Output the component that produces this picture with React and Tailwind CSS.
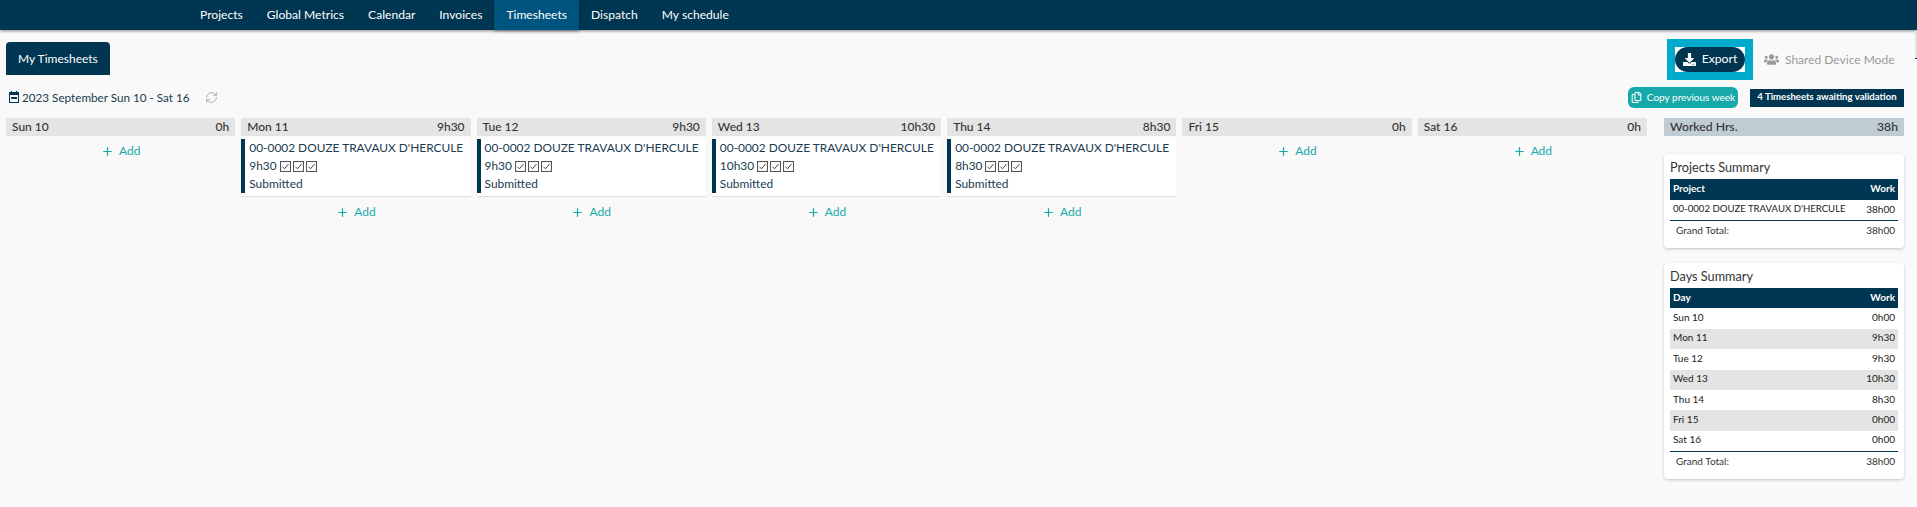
import React from 'react';
import { FaDownload, FaUsers, FaRegCopy } from 'react-icons/fa';
import { RefreshCw, Plus } from 'lucide-react';

const navItems = ['Projects', 'Global Metrics', 'Calendar', 'Invoices', 'Timesheets', 'Dispatch', 'My schedule'];

const days = [
  { label: 'Sun 10', total: '0h' },
  { label: 'Mon 11', total: '9h30', entry: '9h30' },
  { label: 'Tue 12', total: '9h30', entry: '9h30' },
  { label: 'Wed 13', total: '10h30', entry: '10h30' },
  { label: 'Thu 14', total: '8h30', entry: '8h30' },
  { label: 'Fri 15', total: '0h' },
  { label: 'Sat 16', total: '0h' },
];

const daySummary = [
  ['Sun 10', '0h00'],
  ['Mon 11', '9h30'],
  ['Tue 12', '9h30'],
  ['Wed 13', '10h30'],
  ['Thu 14', '8h30'],
  ['Fri 15', '0h00'],
  ['Sat 16', '0h00'],
];

const CalendarIcon = () => (
  <svg width="10" height="12" viewBox="0 0 10 12" className="mr-[3px] ml-[3px] shrink-0 text-[#003651]">
    <rect x="0.5" y="1.5" width="9" height="10" fill="none" stroke="currentColor" />
    <rect x="0" y="1" width="10" height="3" fill="currentColor" />
    <rect x="2" y="0" width="1" height="2" fill="currentColor" />
    <rect x="7" y="0" width="1" height="2" fill="currentColor" />
    <rect x="2" y="6" width="6" height="2" fill="currentColor" />
  </svg>
);

const CheckBox = () => (
  <svg width="11" height="11" viewBox="0 0 11 11" className="shrink-0">
    <rect x="0.5" y="0.5" width="10" height="10" fill="none" stroke="#555" strokeWidth="1.1" />
    <path d="M2.5 5.8 L4.5 7.8 L8.5 3" fill="none" stroke="#444" strokeWidth="1" />
  </svg>
);

const AddButton = () => (
  <div className="flex h-[30px] items-center justify-center gap-[5px] text-[12px] text-[#17a9a9]">
    <Plus size={13} strokeWidth={2.25} />
    <span>Add</span>
  </div>
);

const EntryCard = ({ hours }) => (
  <div className="mt-[3px] flex h-[57px] bg-white shadow-[0_1px_1px_rgba(0,0,0,0.1)]">
    <div className="h-[54px] w-1 bg-[#003651]" />
    <div className="pl-[4px] text-[11.9px] leading-[18px] whitespace-nowrap text-[#1a3b50]">
      <div>00-0002 DOUZE TRAVAUX D'HERCULE</div>
      <div className="flex items-center gap-[2px]">
        <span className="mr-[1px]">{hours}</span>
        <CheckBox />
        <CheckBox />
        <CheckBox />
      </div>
      <div>Submitted</div>
    </div>
  </div>
);

const DayColumn = ({ day }) => (
  <div>
    <div className="flex h-[18px] items-center justify-between bg-[#e4e4e4] px-[6px] text-[12px] font-medium text-[#333]">
      <span>{day.label}</span>
      <span>{day.total}</span>
    </div>
    {day.entry && <EntryCard hours={day.entry} />}
    <div className={day.entry ? 'pt-px' : ''}>
      <AddButton />
    </div>
  </div>
);

const SummaryCard = ({ title, head, headClass, nameClass, rows, zebra }) => (
  <div className="rounded bg-white px-[6px] pt-[5px] pb-[7px] shadow-[0_1px_3px_rgba(0,0,0,0.22)]">
    <div className="h-[20px] text-[12.7px] leading-[16px] text-[#333]">{title}</div>
    <div className={`flex items-center justify-between bg-[#003651] px-[3px] pb-[2px] text-[10px] font-bold text-white ${headClass}`}>
      <span>{head}</span>
      <span>Work</span>
    </div>
    {rows.map(([name, work], i) => (
      <div
        key={name}
        className={`flex h-[20.4px] items-center justify-between px-[3px] pb-[2px] text-[10px] whitespace-nowrap text-[#222] ${zebra && i % 2 === 1 ? 'bg-[#e4e4e4]' : ''}`}
      >
        <span className={nameClass}>{name}</span>
        <span>{work}</span>
      </div>
    ))}
    <div className="flex h-[21px] items-center justify-between border-t border-[#003651] pr-[3px] pb-[2px] pl-[6px] text-[10px] text-[#333]">
      <span>Grand Total:</span>
      <span>38h00</span>
    </div>
  </div>
);

export default function App() {
  return (
    <div className="relative min-h-[507px] overflow-hidden bg-[#f9f9f9] font-['Lato','Open_Sans',sans-serif]">
      {/* Top nav */}
      <nav className="flex h-[30px] bg-[#003651] pl-[188px] text-[12.1px] text-white shadow-[0_1px_3px_rgba(0,0,0,0.45)]">
        {navItems.map((item) => (
          <div
            key={item}
            className={`flex items-center px-3 ${item === 'Timesheets' ? 'bg-[#005580] shadow-[0_1px_3px_rgba(0,0,0,0.4)]' : ''}`}
          >
            {item}
          </div>
        ))}
      </nav>

      {/* sliver of a scrollbar at the right edge */}
      <div className="absolute top-[31px] right-0 h-[28px] w-[2px] border-b border-[#003651] bg-[#e2e2e2]" />

      <div className="pr-[13px] pl-[6px]">
        {/* Tab row */}
        <div className="flex items-start justify-between pt-[9px]">
          <div className="mt-[3px] flex h-[33px] items-center rounded-t bg-[#003651] px-[12px] text-[12px] text-white">
            My Timesheets
          </div>
          <div className="flex items-center">
            <div className="flex h-[41px] w-[86px] items-center justify-center bg-[#00aacc]">
              <div className="bg-white">
                <div className="flex h-[25px] w-[70px] items-center justify-center gap-[6px] rounded-full bg-[#003651] text-[12.2px] text-white">
                  <FaDownload size={13} />
                  <span>Export</span>
                </div>
              </div>
            </div>
            <div className="flex w-[151px] items-center gap-[6px] pl-[11px] text-[12px] whitespace-nowrap text-[#999]">
              <FaUsers size={15} />
              <span>Shared Device Mode</span>
            </div>
          </div>
        </div>

        {/* Week row */}
        <div className="mt-[7px] flex h-[21px] items-center justify-between">
          <div className="flex items-center text-[11.7px] text-[#1a3b50]">
            <CalendarIcon />
            <span>2023 September Sun 10 - Sat 16</span>
            <RefreshCw size={13} strokeWidth={1.75} className="ml-[15px] text-[#aaa]" />
          </div>
          <div className="flex items-center gap-3">
            <div className="flex h-[21px] w-[110px] items-center justify-center gap-[5px] rounded-md bg-[#17a9a9] text-[10px] whitespace-nowrap text-white">
              <FaRegCopy size={11} />
              <span>Copy previous week</span>
            </div>
            <div className="flex h-[18px] w-[154px] items-center justify-center bg-[#003651] text-[9.6px] font-bold whitespace-nowrap text-white">
              4 Timesheets awaiting validation
            </div>
          </div>
        </div>

        {/* Board */}
        <div className="mt-[10px] flex items-start gap-[17px]">
          <div className="grid flex-1 grid-cols-7 gap-[6px]">
            {days.map((day) => (
              <DayColumn key={day.label} day={day} />
            ))}
          </div>
          <div className="w-[240px]">
            <div className="flex h-[18px] items-center justify-between bg-[#c0ccd4] px-[6px] text-[12.2px] font-medium text-[#333]">
              <span>Worked Hrs.</span>
              <span>38h</span>
            </div>
            <div className="mt-[18px] flex flex-col gap-[15px]">
              <SummaryCard title="Projects Summary" head="Project" headClass="h-[21px]" nameClass="text-[9.6px]" rows={[['00-0002 DOUZE TRAVAUX D\'HERCULE', '38h00']]} />
              <SummaryCard title="Days Summary" head="Day" headClass="h-[20px]" rows={daySummary} zebra />
            </div>
          </div>
        </div>
      </div>
    </div>
  );
}
